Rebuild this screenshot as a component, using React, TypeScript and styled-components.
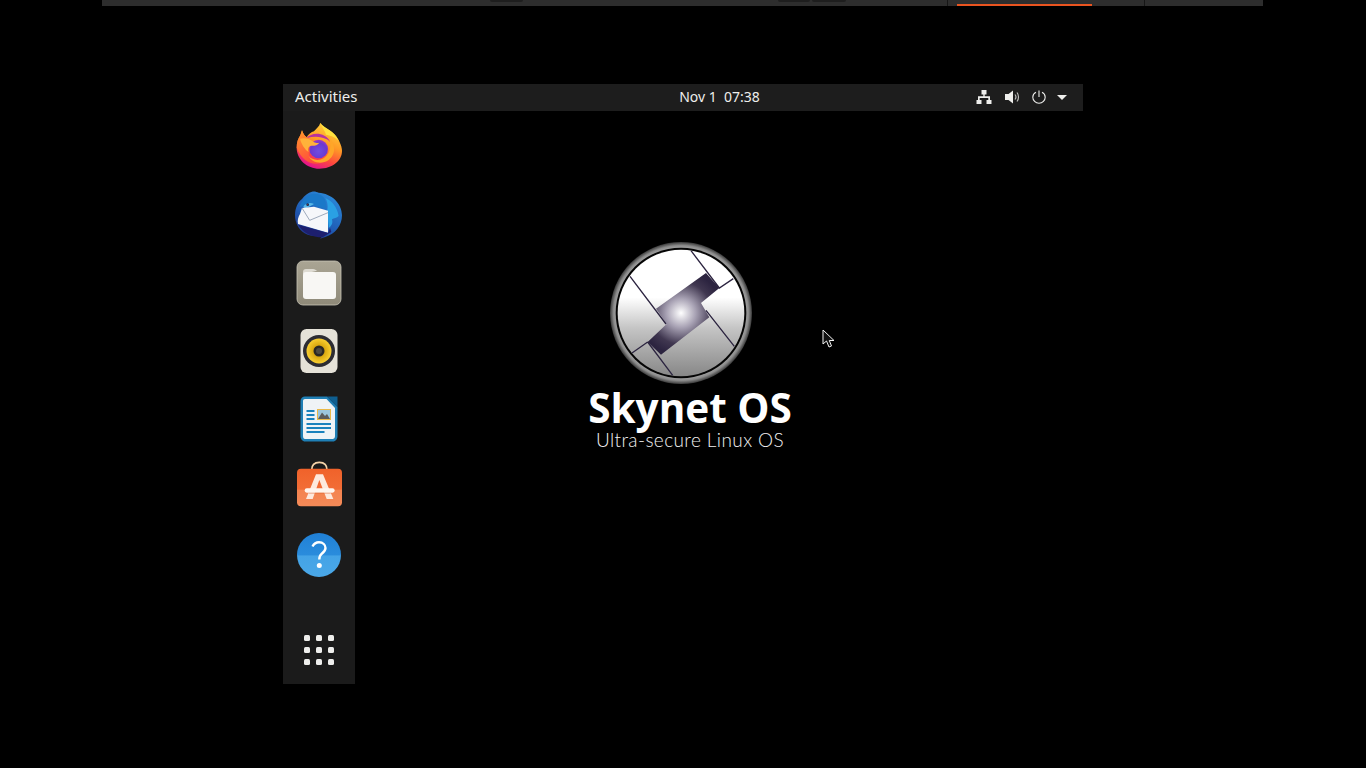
import styled, { createGlobalStyle } from 'styled-components';

const GlobalStyle = createGlobalStyle`
  html, body {
    margin: 0;
    padding: 0;
    background: #000;
    height: 100%;
    overflow: hidden;
  }
  #root {
    height: 100%;
  }
`

const Page = styled.div`
  width: 1366px;
  height: 768px;
  background: #000;
  display: flex;
  flex-direction: column;
`

const HostBar = styled.div`
  width: 1161px;
  height: 6px;
  margin-left: 102px;
  background: #2d2d2d;
  display: flex;
  align-items: flex-start;
  padding-left: 388px;
  box-sizing: border-box;
`

const HostBump = styled.div<{ $w: number; $ml: number }>`
  width: ${p => p.$w}px;
  height: 2px;
  margin-left: ${p => p.$ml}px;
  background: #1e1e1e;
  border-radius: 0 0 5px 5px;
`

const HostTab = styled.div`
  width: 198px;
  height: 6px;
  margin-left: 101px;
  box-sizing: border-box;
  border-left: 1px solid #161616;
  border-right: 1px solid #161616;
  padding: 4px 0 0 9px;
`

const HostTabLine = styled.div`
  width: 135px;
  height: 2px;
  background: #e95420;
`

const Screen = styled.div`
  width: 800px;
  height: 600px;
  margin: 78px 0 0 283px;
  display: flex;
  flex-direction: column;
  font-family: "Noto Sans", "Open Sans", sans-serif;
`

const TopPanel = styled.div`
  height: 27px;
  box-sizing: border-box;
  background: #1d1d1d;
  color: #eeeeec;
  display: grid;
  grid-template-columns: 1fr auto 1fr;
  align-items: center;
  padding: 0 15px 2px 12px;
`

const Activities = styled.div`
  font-size: 15px;
  padding-bottom: 1px;
`

const Clock = styled.div`
  font-size: 14px;
  white-space: pre;
  margin-left: 76px;
`

const Tray = styled.div`
  display: flex;
  justify-content: flex-end;
  align-items: center;
`

const TrayIcon = styled.svg<{ $ml: number }>`
  display: block;
  margin-left: ${p => p.$ml}px;
`

const Body = styled.div`
  flex: 1;
  display: flex;
`

const Dock = styled.div`
  width: 72px;
  background: #1b1b1b;
  display: flex;
  flex-direction: column;
  align-items: center;
  justify-content: space-between;
  padding: 2px 0 19px;
  box-sizing: border-box;
`

const DockApps = styled.div`
  display: flex;
  flex-direction: column;
`

const DockSlot = styled.div`
  width: 72px;
  height: 68px;
  display: flex;
  align-items: center;
  justify-content: center;
`

const AppGrid = styled.div`
  display: grid;
  grid-template-columns: repeat(3, 6px);
  grid-auto-rows: 6px;
  gap: 6px;
`

const AppDot = styled.span`
  background: #eeeeec;
  border-radius: 1.5px;
`

const Desktop = styled.div`
  position: relative;
  flex: 1;
  background: #000;
  padding: 127px 0 0 234px;
`

const Splash = styled.div`
  width: 202px;
  display: flex;
  flex-direction: column;
  align-items: center;
`

const SplashMark = styled.svg`
  display: block;
  margin-left: -18px;
`

const Title = styled.div`
  font-family: "Open Sans", sans-serif;
  font-weight: 700;
  font-size: 40.5px;
  line-height: 40px;
  color: #fff;
  white-space: nowrap;
`

const Subtitle = styled.div`
  font-family: "Lato", sans-serif;
  font-weight: 300;
  font-size: 19px;
  letter-spacing: 0.4px;
  line-height: 18px;
  color: #f0f0f0;
  white-space: nowrap;
  margin-top: 3px;
`

const Cursor = styled.svg`
  position: absolute;
  left: 467px;
  top: 218px;
`

const FirefoxIcon = () => (
  <svg width="54" height="54" viewBox="0 0 162 162">
    <defs>
      <linearGradient id="ffBody" x1="0.8" y1="0.1" x2="0.4" y2="1">
        <stop offset="0" stopColor="#ffcf3a" />
        <stop offset="0.4" stopColor="#ff9a26" />
        <stop offset="0.72" stopColor="#ff4a3c" />
        <stop offset="1" stopColor="#e3148c" />
      </linearGradient>
      <radialGradient id="ffGlobe" cx="0.5" cy="0.62" r="0.62">
        <stop offset="0" stopColor="#6f4de0" />
        <stop offset="0.7" stopColor="#6a38d0" />
        <stop offset="1" stopColor="#a236c6" />
      </radialGradient>
      <linearGradient id="ffLeft" x1="0" y1="0" x2="0.4" y2="1">
        <stop offset="0" stopColor="#ff9a2a" />
        <stop offset="1" stopColor="#ff4f3a" />
      </linearGradient>
    </defs>
    <path d="M85 8C92 26 125 28 140 60C148 76 150 86 150 93C150 123 120 146 82 146C45 146 14 118 14 83C14 68 18 56 25 46L30 31C33 40 38 48 44 52C48 43 58 36 66 34C72 26 82 20 85 8Z" fill="url(#ffBody)" />
    <path d="M14 83C14 68 18 56 25 46L30 31C33 40 38 48 44 52L50 98C50 116 68 126 90 128C60 138 30 123 14 83Z" fill="url(#ffLeft)" />
    <path d="M44 54C58 36 98 34 116 66C122 80 116 64 104 58C86 48 66 48 44 54Z" fill="#b8329e" />
    <circle cx="80" cy="87" r="28" fill="url(#ffGlobe)" />
    <path d="M24 56C38 52 52 56 62 64C68 69 74 70 82 68C76 76 66 78 58 77C50 78 46 86 50 96C38 88 28 72 24 56Z" fill="#ffb23a" />
    <path d="M85 8C95 26 128 30 140 63C128 50 115 46 102 44C100 33 90 23 85 8Z" fill="#ffe23f" />
    <path d="M104 46C120 64 120 98 96 114C80 124 60 120 50 108C60 130 90 134 110 120C132 104 134 72 104 46Z" fill="#ffa628" />
  </svg>
)

const ThunderbirdIcon = () => (
  <svg width="54" height="54" viewBox="0 0 162 162">
    <defs>
      <linearGradient id="tbBody" x1="0.8" y1="0" x2="0.2" y2="1">
        <stop offset="0" stopColor="#2c8cdc" />
        <stop offset="0.6" stopColor="#1f5cb4" />
        <stop offset="1" stopColor="#203088" />
      </linearGradient>
    </defs>
    <path d="M60 11C68 9 74 12 80 14C118 16 150 46 150 82C150 112 130 138 100 147L84 152L98 138C78 146 56 146 38 136C20 126 9 104 9 82C9 60 18 42 30 33C38 22 48 14 60 11Z" fill="url(#tbBody)" />
    <path d="M38 32C50 16 70 14 84 20C100 26 104 44 100 62L66 52L24 56C26 46 30 40 38 32Z" fill="#1a78c8" />
    <path d="M100 30C120 38 136 58 140 84C134 90 126 90 120 94C124 108 116 116 110 120L106 66C108 52 106 40 100 30Z" fill="#2aa0e4" />
    <path d="M34 56C40 46 54 42 66 48L40 62Z" fill="#58b7e8" />
    <circle cx="47" cy="50" r="4" fill="#12234f" />
    <circle cx="47" cy="50" r="1.500" fill="#c9472e" />
    <path d="M30 60L66 56L108 68V134L18 108C16 98 18 88 24 78Z" fill="#f6f7fa" />
    <path d="M30 60L53 97L108 74" fill="none" stroke="#8d9aae" strokeWidth="2.500" />
    <path d="M19 110L108 135L114 120L118 132L92 148C58 148 32 134 19 110Z" fill="#1d1f6e" />
  </svg>
)

const FilesIcon = () => (
  <svg width="46" height="46" viewBox="0 0 46 46">
    <defs>
      <linearGradient id="fileTile" x1="0" y1="0" x2="0" y2="1">
        <stop offset="0" stopColor="#aaa594" />
        <stop offset="1" stopColor="#8f8a79" />
      </linearGradient>
    </defs>
    <rect x="1" y="1" width="44" height="44" rx="6" fill="url(#fileTile)" stroke="#c9c5b6" strokeWidth="0.8" />
    <path d="M7 12C7 10 8 9 10 9H17C19 9 20 10 21 11H20L7 14Z" fill="#dedbd2" />
    <rect x="7" y="12" width="33" height="27" rx="3" fill="#f8f7f4" />
  </svg>
)

const RhythmboxIcon = () => (
  <svg width="38" height="46" viewBox="0 0 38 46">
    <defs>
      <radialGradient id="rbCone">
        <stop offset="0.45" stopColor="#d9a70f" />
        <stop offset="1" stopColor="#f9cf30" />
      </radialGradient>
    </defs>
    <rect x=".5" y="1" width="37" height="44" rx="6" fill="#e5e2d8" />
    <circle cx="19" cy="23" r="16" fill="#2c2c32" />
    <circle cx="19" cy="23" r="12.500" fill="url(#rbCone)" />
    <circle cx="19" cy="23" r="5.500" fill="#2a2824" />
    <circle cx="19" cy="23" r="3" fill="#4d4a42" />
  </svg>
)

const WriterIcon = () => (
  <svg width="38" height="46" viewBox="0 0 38 46">
    <path d="M5 .5H27L37.500 11V40C37.500 43 35.500 45.500 33 45.500H5C2.500 45.500 .5 43 .5 40V5C.5 2.500 2.500 .5 5 .5Z" fill="#1f7fb5" />
    <path d="M5 3H26.500L35 12V40C35 42 34 43 32.500 43H5C3.800 43 3 42 3 40V5C3 3.800 3.800 3 5 3Z" fill="#eff3f6" />
    <path d="M27 .5H37.500V11Z" fill="#0f5f90" />
    <rect x="6.500" y="14" width="8" height="2" fill="#1a82bd" />
    <rect x="6.500" y="18" width="8" height="2" fill="#1a82bd" />
    <rect x="6.500" y="22" width="8" height="2" fill="#1a82bd" />
    <rect x="17" y="13" width="14" height="11" fill="#e9b949" />
    <rect x="18" y="14" width="12" height="9" fill="#9cc6de" />
    <path d="M18 23L22 16.500L25 20L27 18L30 23Z" fill="#5c5c5c" />
    <rect x="6.500" y="27" width="24.500" height="2" fill="#1a82bd" />
    <rect x="6.500" y="31" width="24.500" height="2" fill="#1a82bd" />
    <rect x="6.500" y="35" width="18" height="2" fill="#1a82bd" />
  </svg>
)

const SoftwareIcon = () => (
  <svg width="54" height="54" viewBox="0 0 162 162">
    <defs>
      <linearGradient id="swBag" x1="0" y1="0" x2="0" y2="1">
        <stop offset="0" stopColor="#f0622a" />
        <stop offset="0.55" stopColor="#f26d36" />
        <stop offset="0.56" stopColor="#f4834f" />
        <stop offset="1" stopColor="#f48a58" />
      </linearGradient>
    </defs>
    <path d="M59 30C59 14 68 7 82 7C96 7 105 14 105 30" fill="none" stroke="#f5d3a8" strokeWidth="5" />
    <rect x="15" y="26" width="135" height="113" rx="12" fill="url(#swBag)" />
    <path d="M72 43H93L124 117H104L82 60L62 117H42Z" fill="#fde9dd" />
    <rect x="38" y="85" width="90" height="13" rx="6.500" fill="#fff5ee" />
    <rect x="50" y="98" width="66" height="3" fill="#d9602e" opacity="0.5" />
  </svg>
)

const HelpIcon = () => (
  <svg width="46" height="46" viewBox="0 0 46 46">
    <defs>
      <linearGradient id="helpBall" x1="0" y1="0" x2="0" y2="1">
        <stop offset="0" stopColor="#2080d6" />
        <stop offset="0.5" stopColor="#2a8cdc" />
        <stop offset="0.52" stopColor="#44a3e6" />
        <stop offset="1" stopColor="#4aa8e8" />
      </linearGradient>
    </defs>
    <circle cx="23" cy="23" r="22" fill="url(#helpBall)" />
    <path d="M16.500 14.500C18 11.500 20.500 10.300 23 10.300C27 10.300 29.500 13 29.500 16C29.500 19 27.500 20.500 25.500 22C24 23.200 23.300 24.500 23.300 27.500" fill="none" stroke="#fff" strokeWidth="2.400" />
    <circle cx="23.300" cy="33.500" r="2.500" fill="#fff" />
  </svg>
)

const dockIcons = [FirefoxIcon, ThunderbirdIcon, FilesIcon, RhythmboxIcon, WriterIcon, SoftwareIcon, HelpIcon]

export default function App() {
  return (
    <Page>
      <GlobalStyle />
      <HostBar>
        <HostBump $w={33} $ml={0} />
        <HostBump $w={32} $ml={255} />
        <HostBump $w={34} $ml={2} />
        <HostTab>
          <HostTabLine />
        </HostTab>
      </HostBar>
      <Screen>
        <TopPanel>
          <Activities>Activities</Activities>
          <Clock>Nov 1  07:38</Clock>
          <Tray>
            <TrayIcon $ml={0} width="16" height="16" viewBox="0 0 16 16">
              <path d="M5.500 1H10.500V5.500H8.700V7.300H14V11H15.500V15H10.500V11H12.300V9H3.700V11H5.500V15H.5V11H2V7.300H7.300V5.500H5.500Z" fill="#eeeeec" />
            </TrayIcon>
            <TrayIcon $ml={12} width="16" height="16" viewBox="0 0 16 16">
              <path d="M1 5H4.500L9 1.500V14.500L4.500 11H1Z" fill="#eeeeec" />
              <path d="M11 5.500C12 6.800 12 9.200 11 10.500M13 3.500C15 6 15 10 13 12.500" fill="none" stroke="#bdbdbb" strokeWidth="1.200" />
            </TrayIcon>
            <TrayIcon $ml={11} width="16" height="16" viewBox="0 0 16 16">
              <path d="M5 3.300C3 4.300 1.800 6.200 1.800 8.300C1.800 11.500 4.500 14.200 8 14.200C11.500 14.200 14.200 11.500 14.200 8.300C14.200 6.200 13 4.300 11 3.300" fill="none" stroke="#eeeeec" strokeWidth="1.100" />
              <path d="M8 1.500V8" fill="none" stroke="#eeeeec" strokeWidth="1.100" />
            </TrayIcon>
            <TrayIcon $ml={9} width="12" height="16" viewBox="0 0 12 16">
              <path d="M1 6H11L6 11Z" fill="#eeeeec" />
            </TrayIcon>
          </Tray>
        </TopPanel>
        <Body>
          <Dock>
            <DockApps>
              {dockIcons.map((Icon, i) => (
                <DockSlot key={i}>
                  <Icon />
                </DockSlot>
              ))}
            </DockApps>
            <AppGrid>
              {Array.from({ length: 9 }, (_, i) => (
                <AppDot key={i} />
              ))}
            </AppGrid>
          </Dock>
          <Desktop>
            <Splash>
              <SplashMark width="150" height="150" viewBox="0 0 450 450">
                <defs>
                  <radialGradient id="ring" gradientUnits="userSpaceOnUse" cx="225" cy="225" r="213">
                    <stop offset="0.9" stopColor="#a8a8a8" />
                    <stop offset="0.95" stopColor="#8c8c8c" />
                    <stop offset="1" stopColor="#3a3a3a" />
                  </radialGradient>
                  <linearGradient id="glass" gradientUnits="userSpaceOnUse" x1="0" y1="30" x2="0" y2="420">
                    <stop offset="0" stopColor="#ffffff" />
                    <stop offset="0.38" stopColor="#ffffff" />
                    <stop offset="0.62" stopColor="#c4c4c4" />
                    <stop offset="1" stopColor="#858585" />
                  </linearGradient>
                  <radialGradient id="band" gradientUnits="userSpaceOnUse" cx="225" cy="225" r="125">
                    <stop offset="0" stopColor="#ffffff" />
                    <stop offset="0.35" stopColor="#a8a2b4" />
                    <stop offset="0.75" stopColor="#403750" />
                    <stop offset="1" stopColor="#2c2440" />
                  </radialGradient>
                  <clipPath id="disc">
                    <circle cx="225" cy="225" r="190" />
                  </clipPath>
                </defs>
                <circle cx="225" cy="225" r="213" fill="url(#ring)" />
                <circle cx="225" cy="225" r="196" fill="#050505" />
                <g clipPath="url(#disc)">
                  <rect x="30" y="30" width="390" height="390" fill="url(#glass)" />
                  <path d="M300 105L340 150L285 195L310 238L165 350L125 312L182 258L150 212Z" fill="url(#band)" />
                  <path d="M255 38L340 150L382 122M72 115L180 258M300 217L385 325M125 312L78 345M125 312L200 412" fill="none" stroke="#2c2440" strokeWidth="4" />
                </g>
              </SplashMark>
              <Title>Skynet OS</Title>
              <Subtitle>Ultra-secure Linux OS</Subtitle>
            </Splash>
            <Cursor width="14" height="20" viewBox="0 0 14 20">
              <path d="M1 1V15L4.500 12L7 18L9.500 17L7.300 11.500H12Z" fill="#111" stroke="#f2f2f2" strokeWidth="1" />
            </Cursor>
          </Desktop>
        </Body>
      </Screen>
    </Page>
  )
}
